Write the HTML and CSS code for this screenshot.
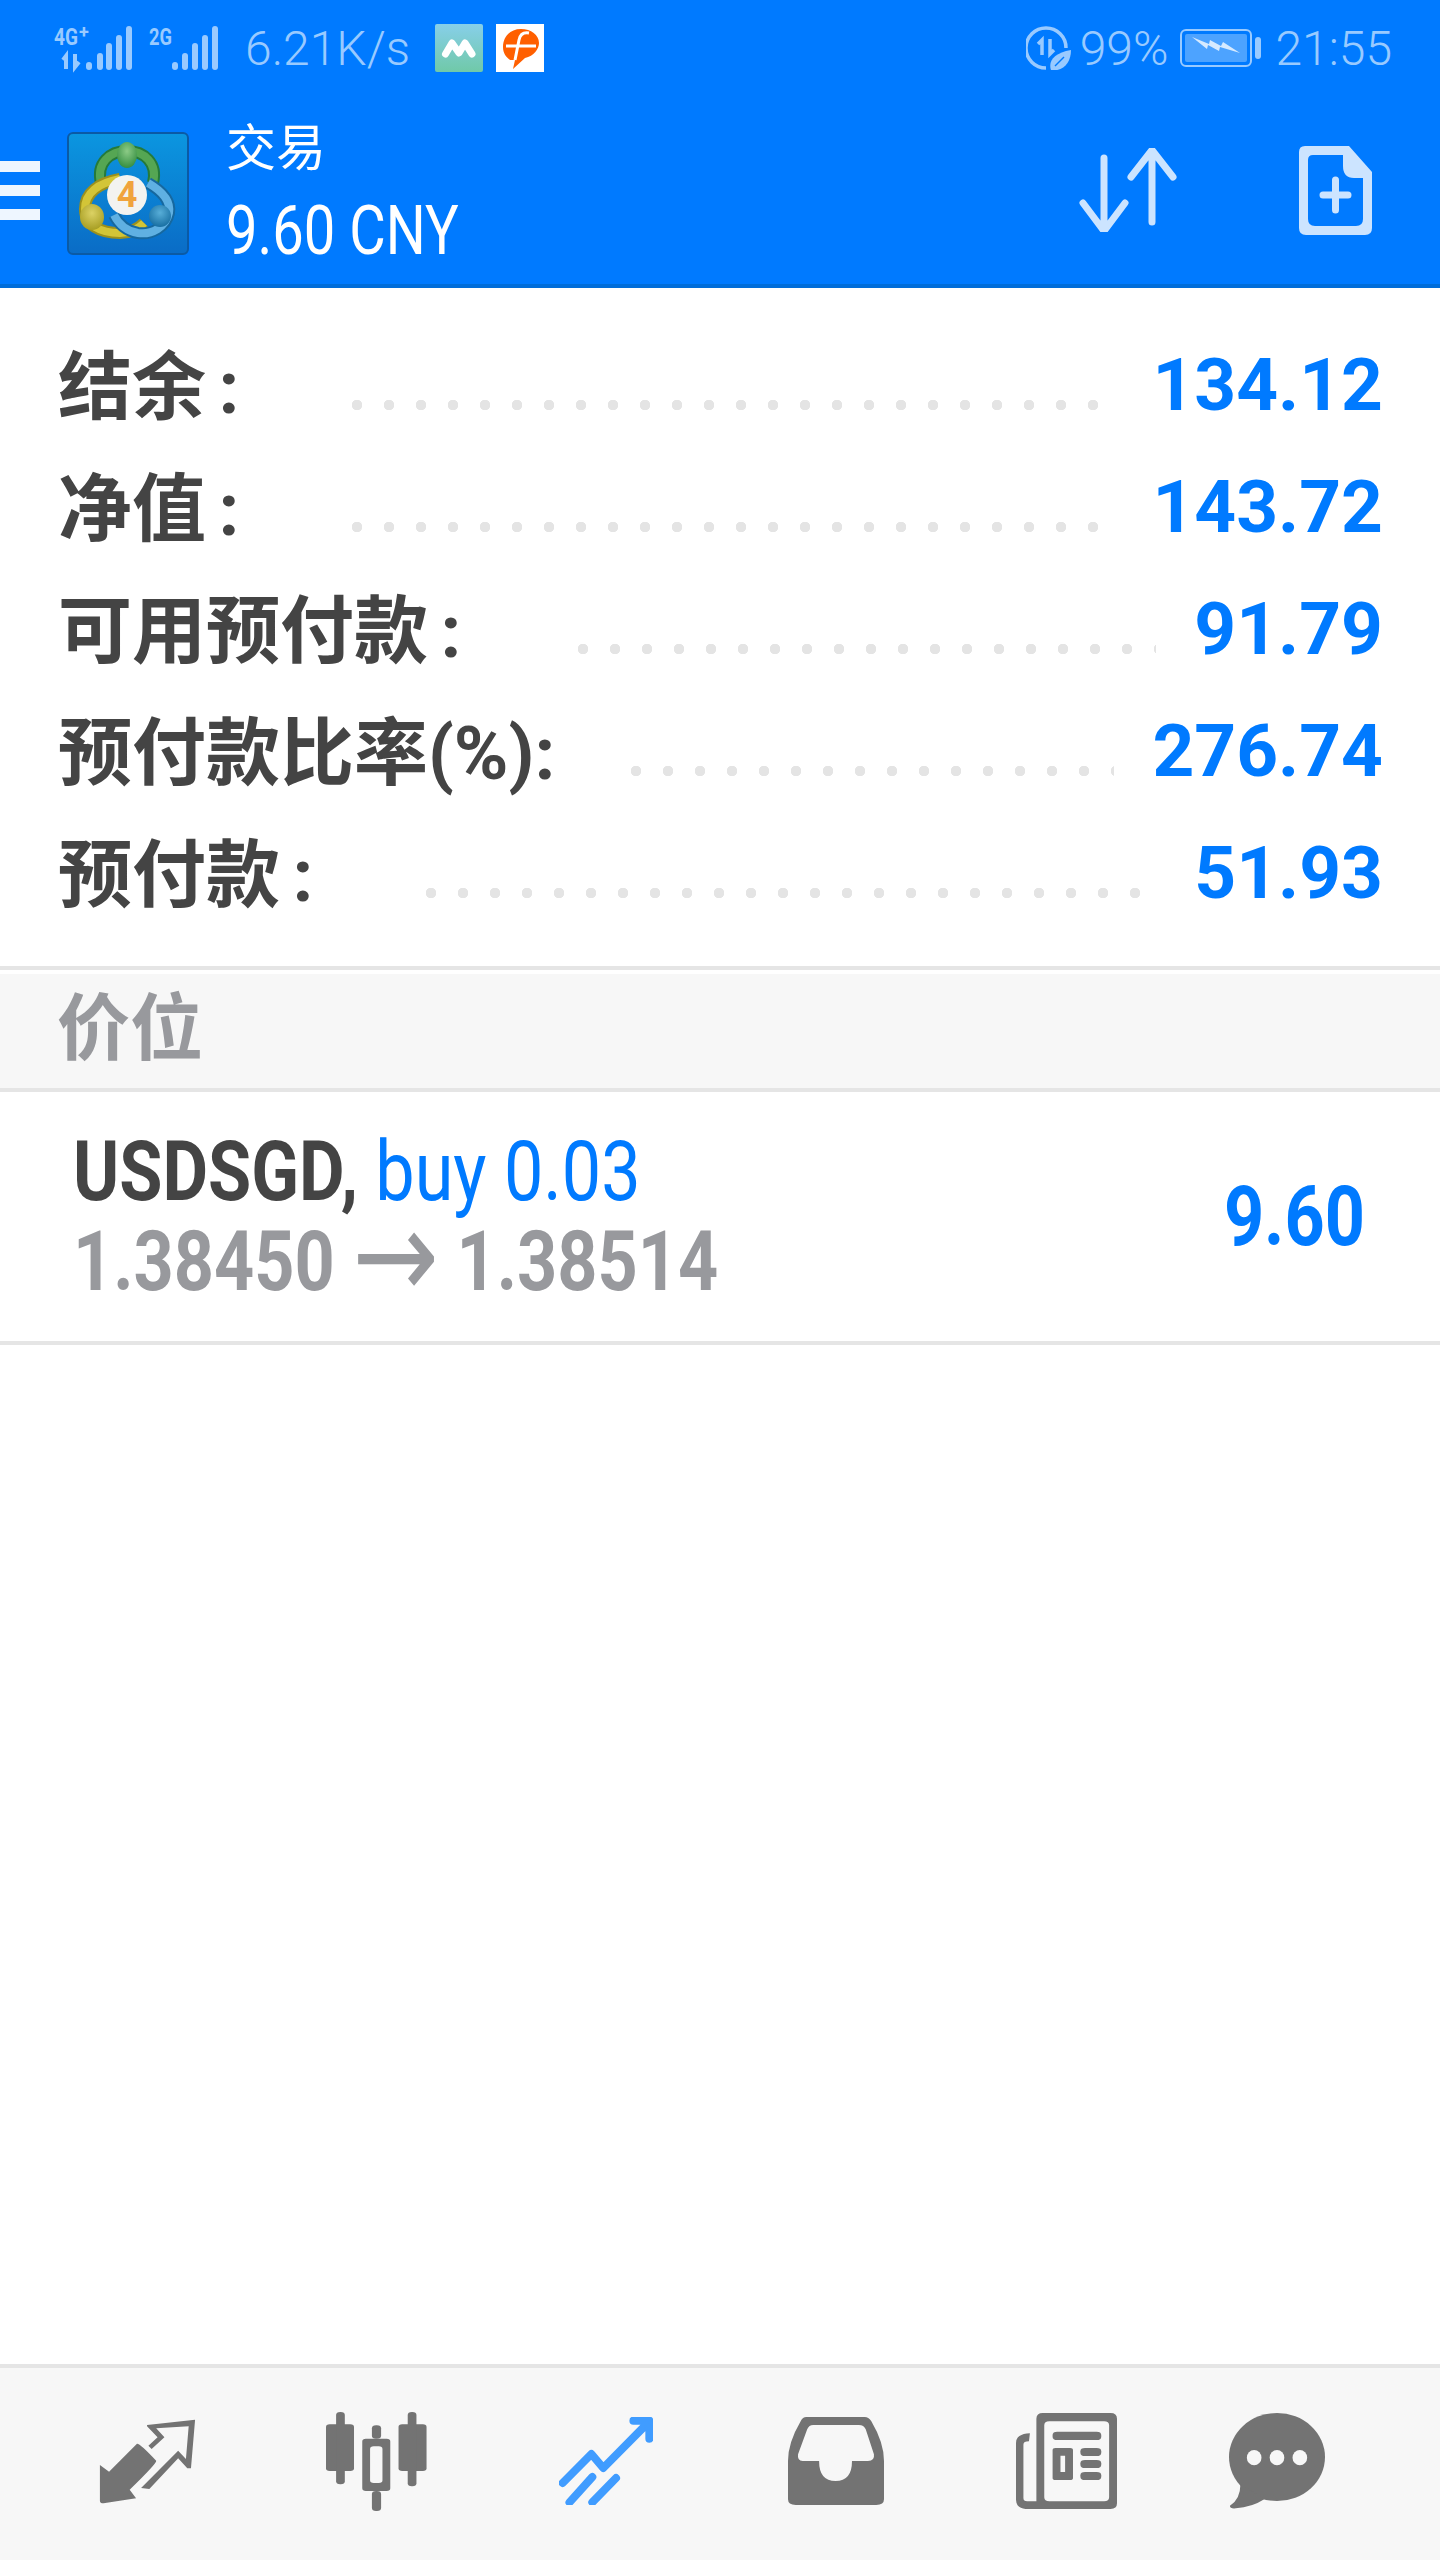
FILE: index.html
```html
<!DOCTYPE html>
<html lang="zh-CN">
<head>
    <meta charset="UTF-8">
    <meta name="viewport" content="width=device-width, initial-scale=1.0">
    <title>交易</title>
    <link rel="stylesheet" href="styles.css">
</head>
<body>
    <div class="app">
        <div class="header">
            <!-- Status bar -->
            <div class="status-bar">
                <svg class="signal" width="164" height="44" viewBox="54 26 164 44">
                    <text class="net-label" x="54" y="45" textLength="24" lengthAdjust="spacingAndGlyphs">4G</text>
                    <text class="net-plus" x="79" y="38">+</text>
                    <text class="net-label" x="149" y="45" textLength="23" lengthAdjust="spacingAndGlyphs">2G</text>
                    <path class="signal-arrows" d="M66 69V56l-3 4M75 54v13l4-5"/>
                    <rect x="86" y="62" width="6" height="8" rx="3"/>
                    <rect x="97" y="53" width="6" height="17" rx="3"/>
                    <rect x="106" y="43" width="6" height="27" rx="3"/>
                    <rect x="116" y="35" width="6" height="35" rx="3"/>
                    <rect x="126" y="26" width="6" height="44" rx="3"/>
                    <rect x="172" y="62" width="6" height="8" rx="3"/>
                    <rect x="182" y="53" width="6" height="17" rx="3"/>
                    <rect x="192" y="43" width="6" height="27" rx="3"/>
                    <rect x="202" y="35" width="6" height="35" rx="3"/>
                    <rect x="212" y="26" width="6" height="44" rx="3"/>
                </svg>
                <span class="speed">6.21K/s</span>
                <svg class="app-m" width="48" height="48" viewBox="0 0 48 48">
                    <defs>
                        <linearGradient id="mGrad" x1="0" y1="0" x2="0" y2="1">
                            <stop offset="0" stop-color="#87cfe9"/>
                            <stop offset="1" stop-color="#70c9a8"/>
                        </linearGradient>
                    </defs>
                    <rect width="48" height="48" rx="2" fill="url(#mGrad)"/>
                    <path d="M10.500 30L17 19 24 29 30 19 37 30" fill="none" stroke="#fff" stroke-width="7" stroke-linecap="round" stroke-linejoin="round"/>
                </svg>
                <svg class="app-f" width="48" height="48" viewBox="0 0 48 48">
                    <rect width="48" height="48" fill="#fff"/>
                    <path d="M25 5C13 5 7 14 7 23c0 6 3 10 7 13l5 0-2 9 12-11c9-2 14-9 14-15C43 11 35 5 25 5z" fill="#ff5f00"/>
                    <path d="M33 9c-6-1-9 2-10 7l-4 20M10 22h30" fill="none" stroke="#fff" stroke-width="3"/>
                </svg>
                <div class="status-right">
                    <svg width="46" height="44" viewBox="0 0 46 44">
                        <path d="M40 22a20 20 0 1 0-20 20" fill="none" stroke="#99caff" stroke-width="3.500"/>
                        <path d="M16 29V14l-4 4M24 13v15l4-4" fill="none" stroke="#99caff" stroke-width="3.500"/>
                        <path d="M25 44c-3-9 3-17 20-20 0 12-7 22-20 20z" fill="#99caff"/>
                        <path d="M29 40l9-9" stroke="#007aff" stroke-width="1.500"/>
                    </svg>
                    <span class="battery-text">99%</span>
                    <svg width="81" height="38" viewBox="0 0 81 38">
                        <rect x="1" y="1" width="70" height="36" rx="5" fill="none" stroke="#99caff" stroke-width="2"/>
                        <rect x="5" y="5" width="62" height="28" rx="2" fill="#4da3ff"/>
                        <path d="M12 8l17 7 1-4 11 6 2-4 17 11-20-6-1 4-11-6-1 4z" fill="#d6eaff"/>
                        <rect x="75" y="8" width="6" height="22" rx="3" fill="#99caff"/>
                    </svg>
                    <span class="clock">21:55</span>
                </div>
            </div>

            <!-- Toolbar -->
            <div class="toolbar">
                <div class="menu-btn"><span></span><span></span><span></span></div>
                <svg class="logo" width="122" height="123" viewBox="-1 -1 122 123">
                    <defs>
                        <linearGradient id="logoBg" x1="0" y1="0" x2="0" y2="1">
                            <stop offset="0" stop-color="#0b96e0"/>
                            <stop offset="1" stop-color="#0a6cc6"/>
                        </linearGradient>
                        <radialGradient id="headGreen" cx="0.5" cy="0.35" r="0.7">
                            <stop offset="0" stop-color="#8ccb86"/>
                            <stop offset="1" stop-color="#2f8a3d"/>
                        </radialGradient>
                        <radialGradient id="headYellow" cx="0.5" cy="0.35" r="0.7">
                            <stop offset="0" stop-color="#dcd264"/>
                            <stop offset="1" stop-color="#a39a1e"/>
                        </radialGradient>
                        <radialGradient id="headBlue" cx="0.5" cy="0.35" r="0.7">
                            <stop offset="0" stop-color="#58aed8"/>
                            <stop offset="1" stop-color="#136a9e"/>
                        </radialGradient>
                    </defs>
                    <rect width="120" height="121" rx="5" fill="url(#logoBg)" stroke="#0b5aa5" stroke-width="2"/>
                    <path d="M33 50C28 30 42 18 59 18 76 18 90 30 85 50" fill="none" stroke="#257a3a" stroke-width="12"/>
                    <path d="M33 50C28 30 42 18 59 18 76 18 90 30 85 50" fill="none" stroke="#55a653" stroke-width="8"/>
                    <ellipse cx="59" cy="22" rx="10" ry="13" fill="url(#headGreen)"/>
                    <path d="M52 46C30 50 17 60 17 76 17 92 32 100 52 100 62 100 70 96 76 90" fill="none" stroke="#9c901c" stroke-width="12"/>
                    <path d="M52 46C30 50 17 60 17 76 17 92 32 100 52 100 62 100 70 96 76 90" fill="none" stroke="#d3c537" stroke-width="8"/>
                    <ellipse cx="24" cy="84" rx="12" ry="13" fill="url(#headYellow)"/>
                    <path d="M80 50C94 58 103 68 101 80 98 94 84 102 70 100 58 98 50 90 46 82" fill="none" stroke="#16689f" stroke-width="12"/>
                    <path d="M80 50C94 58 103 68 101 80 98 94 84 102 70 100 58 98 50 90 46 82" fill="none" stroke="#5fb0e2" stroke-width="8"/>
                    <circle cx="92" cy="83" r="11" fill="url(#headBlue)"/>
                    <circle cx="59" cy="62" r="20" fill="#f3f3f0"/>
                    <text class="logo-four" x="59" y="74" text-anchor="middle">4</text>
                </svg>
                <div class="account">
                    <div class="account-title">交易</div>
                    <div class="account-profit"><span class="narrow">9.60 CNY</span></div>
                </div>
                <div class="toolbar-actions">
                    <svg class="sort-icon" width="98" height="84" viewBox="0 0 98 84">
                        <path d="M25 10v68M4 55l21 28 21-28M73 4v70M52 29L73 2l21 27" fill="none" stroke="#cce4ff" stroke-width="7" stroke-linecap="round" stroke-linejoin="round"/>
                    </svg>
                    <svg class="new-icon" width="73" height="89" viewBox="0 0 73 89" fill-rule="evenodd">
                        <path d="M6 0H50L73 26V82Q73 89 66 89H7Q0 89 0 82V6Q0 0 6 0zM14 9Q9 9 9 14V73Q9 80 16 80H57Q64 80 64 73V32H55Q44 32 44 20V9z" fill="#cce4ff"/>
                        <path d="M36.500 34v30M24 49h25" stroke="#cce4ff" stroke-width="7" stroke-linecap="round"/>
                    </svg>
                </div>
            </div>
        </div>

        <!-- Account summary -->
        <div class="summary">
            <div class="summary-row">
                <div class="summary-label">结余 :</div>
                <div class="leader"></div>
                <div class="summary-value">134.12</div>
            </div>
            <div class="summary-row">
                <div class="summary-label">净值 :</div>
                <div class="leader"></div>
                <div class="summary-value">143.72</div>
            </div>
            <div class="summary-row">
                <div class="summary-label">可用预付款 :</div>
                <div class="leader leader-wide"></div>
                <div class="summary-value">91.79</div>
            </div>
            <div class="summary-row">
                <div class="summary-label">预付款比率(%):</div>
                <div class="leader leader-short"></div>
                <div class="summary-value">276.74</div>
            </div>
            <div class="summary-row">
                <div class="summary-label">预付款 :</div>
                <div class="leader"></div>
                <div class="summary-value">51.93</div>
            </div>
        </div>

        <div class="section-title">价位</div>

        <!-- Open position -->
        <div class="position">
            <div class="position-info">
                <div class="position-line"><span class="narrow"><b>USDSGD,</b> <span class="position-side">buy 0.03</span></span></div>
                <div class="position-line position-prices"><span class="narrow">1.38450 <span class="price-arrow">→</span> 1.38514</span></div>
            </div>
            <div class="position-profit"><span class="narrow narrow-right">9.60</span></div>
        </div>

        <div class="spacer"></div>

        <!-- Bottom navigation -->
        <div class="nav">
            <svg class="nav-icon icon-quotes" width="97" height="85" viewBox="215 240 212 255" preserveAspectRatio="none">
                <path d="M217 378L237 398 298 314Q304 312 340 365 342 372 282 452L296 478 225 493Q217 493 217 485z"/>
                <path d="M320 258L425 242 416 388H408L388 358 325 450 307 447 388 335 405 360 411 262 340 268 358 295 330 330 323 320 343 295 320 262z"/>
            </svg>
            <svg class="nav-icon icon-charts" width="101" height="99" viewBox="710 215 220 297" preserveAspectRatio="none" fill-rule="evenodd">
                <rect x="710" y="252" width="61" height="140" rx="8"/>
                <rect x="732" y="215" width="19" height="217" rx="9"/>
                <path d="M797 295H842Q850 295 850 303V444Q850 452 842 452H797Q789 452 789 444V303Q789 295 797 295zM814 318Q806 318 806 326V420Q806 428 814 428H825Q833 428 833 420V326Q833 318 825 318z"/>
                <rect x="810" y="255" width="20" height="40" rx="9"/>
                <rect x="810" y="452" width="20" height="60" rx="9"/>
                <rect x="868" y="252" width="61" height="140" rx="8"/>
                <rect x="888" y="215" width="19" height="223" rx="9"/>
            </svg>
            <svg class="nav-icon icon-trade" width="94" height="88" viewBox="1217 227 206 264" preserveAspectRatio="none">
                <path d="M1225 425L1288 338 1314 380 1415 240M1380 238H1415V292M1290 407L1240 483M1342 410L1290 483" fill="none" stroke="#409cff" stroke-width="8" stroke-linecap="round" stroke-linejoin="round" vector-effect="non-scaling-stroke"/>
            </svg>
            <svg class="nav-icon icon-tray" width="96" height="88" viewBox="150 228 210 264" preserveAspectRatio="none" fill-rule="evenodd">
                <path d="M190 228H318Q326 228 332 240 360 305 360 360V475Q360 492 343 492H167Q150 492 150 475V360Q150 305 178 240 182 228 190 228zM205 252Q196 252 192 265L172 340Q170 360 182 360H218Q218 420 254 420 290 420 290 360H325Q340 360 338 340L320 265Q316 252 305 252z"/>
            </svg>
            <svg class="nav-icon icon-news" width="101" height="96" viewBox="648 215 218 288" preserveAspectRatio="none" fill-rule="evenodd">
                <path d="M706 215H852Q866 215 866 232V486Q866 503 852 503H675Q648 503 648 475V305Q648 278 678 276L676 300Q664 300 664 310V470Q664 480 672 480H692V232Q692 215 706 215zM720 240Q709 240 709 252V468Q709 480 720 480H838Q849 480 849 468V252Q849 240 838 240z"/>
                <rect x="727" y="271" width="105" height="25" rx="10"/>
                <path d="M733 320H765Q771 320 771 326V410Q771 416 765 416H733Q727 416 727 410V326Q727 320 733 320zM744 343V392H754V343z"/>
                <rect x="787" y="320" width="45" height="24" rx="10"/>
                <rect x="787" y="356" width="45" height="24" rx="10"/>
                <rect x="787" y="392" width="45" height="24" rx="10"/>
            </svg>
            <svg class="nav-icon icon-chat" width="96" height="96" viewBox="1110 215 210 290" preserveAspectRatio="none">
                <ellipse cx="1215" cy="348" rx="105" ry="133"/>
                <path d="M1135 430Q1135 475 1112 495 1112 505 1125 503 1160 500 1188 475z"/>
                <ellipse class="chat-dot" cx="1165" cy="350" rx="16" ry="23"/>
                <ellipse class="chat-dot" cx="1215" cy="350" rx="16" ry="23"/>
                <ellipse class="chat-dot" cx="1265" cy="350" rx="16" ry="23"/>
            </svg>
        </div>
    </div>
</body>
</html>
```
FILE: styles.css
```css
* { margin: 0; padding: 0; box-sizing: border-box; }
body {
    font-family: Roboto, "Noto Sans CJK SC", sans-serif;
    background: #fff;
}
svg { display: block; flex: none; }
.app { display: flex; flex-direction: column; height: 2560px; }

/* condensed look, no condensed face is installed */
.narrow { display: inline-block; transform: scaleX(0.835); transform-origin: left center; white-space: nowrap; }
.narrow-right { transform-origin: right center; }

.header { height: 288px; background: #007aff; border-bottom: 4px solid #006dd9; }

.status-bar { display: flex; align-items: center; height: 96px; padding: 0 48px 0 54px; color: #99caff; }
.signal { fill: #99caff; overflow: visible; }
.net-label { font-size: 24px; font-weight: 700; }
.net-plus { font-size: 18px; font-weight: 700; }
.signal-arrows { fill: none; stroke: #99caff; stroke-width: 4; }
.speed { margin-left: 27px; font-size: 48px; font-weight: 300; }
.app-m { margin-left: 25px; }
.app-f { margin-left: 13px; }
.status-right { display: flex; align-items: center; margin-left: auto; }
.battery-text { margin: 0 12px 0 8px; font-size: 48px; font-weight: 300; }
.clock { margin-left: 14px; font-size: 48px; font-weight: 300; }

.toolbar { display: flex; align-items: center; height: 188px; color: #fff; }
.menu-btn { display: flex; flex-direction: column; gap: 13px; width: 40px; }
.menu-btn span { height: 11px; background: #eef6ff; }
.logo { margin-left: 27px; margin-top: 6px; }
.account { margin-left: 37px; margin-top: 12px; }
.account-title { margin-bottom: 10px; font-size: 50px; line-height: 60px; }
.account-profit { font-size: 68px; line-height: 84px; }
.account-profit .narrow { transform: scaleX(0.825); }
.toolbar-actions { display: flex; align-items: center; margin-left: auto; padding-right: 68px; }
.new-icon { margin-left: 122px; }

.summary { padding: 36px 57px 32px 58px; border-bottom: 4px solid #e5e5e5; }
.summary-row { display: flex; align-items: center; height: 122px; }
.summary-label { margin-top: -10px; font-size: 74px; font-weight: 700; word-spacing: -6px; color: #444; white-space: nowrap; }
.summary-value { font-size: 73px; font-weight: 700; color: #007aff; }
.leader {
    flex: 1;
    align-self: stretch;
    margin: 0 38px 0 113px;
    background-image: radial-gradient(circle at 5px 5px, #e4e4e4 5px, transparent 5.500px);
    background-size: 32px 10px;
    background-repeat: repeat-x;
    background-position: left calc(50% + 20px);
}
.leader-wide { margin-left: 117px; }
.leader-short { margin-left: 76px; }

.section-title {
    margin-top: 4px;
    height: 118px;
    padding-left: 57px;
    font-size: 73px;
    font-weight: 700;
    line-height: 110px;
    color: #98999d;
    background: #f7f7f7;
    border-bottom: 4px solid #e5e5e5;
}

.position { display: flex; align-items: center; justify-content: space-between; height: 253px; padding: 0 75px 0 73px; border-bottom: 4px solid #e5e5e5; }
.position-line { font-size: 84px; line-height: 90px; white-space: nowrap; }
.position-line b { color: #444; }
.position-side { color: #007aff; }
.position-prices { font-weight: 700; color: #98999d; }
.price-arrow { font-family: "DejaVu Sans", sans-serif; font-size: 124px; font-weight: 400; line-height: 0; vertical-align: -8px; }
.position-profit { font-size: 84px; font-weight: 700; color: #007aff; }

.spacer { flex: 1; }

.nav { display: flex; align-items: center; gap: 132px; height: 196px; padding: 0 0 0 99px; background: #f7f7f7; border-top: 4px solid #e5e5e5; }
.nav-icon { fill: #737373; margin-top: -6px; }
.icon-charts { margin-left: -2px; }
.icon-tray { margin-left: 3px; }
.icon-chat { margin-left: -20px; }
.chat-dot { fill: #f7f7f7; }
.logo-four { font-size: 36px; font-weight: 700; fill: #f0a33c; }
```
